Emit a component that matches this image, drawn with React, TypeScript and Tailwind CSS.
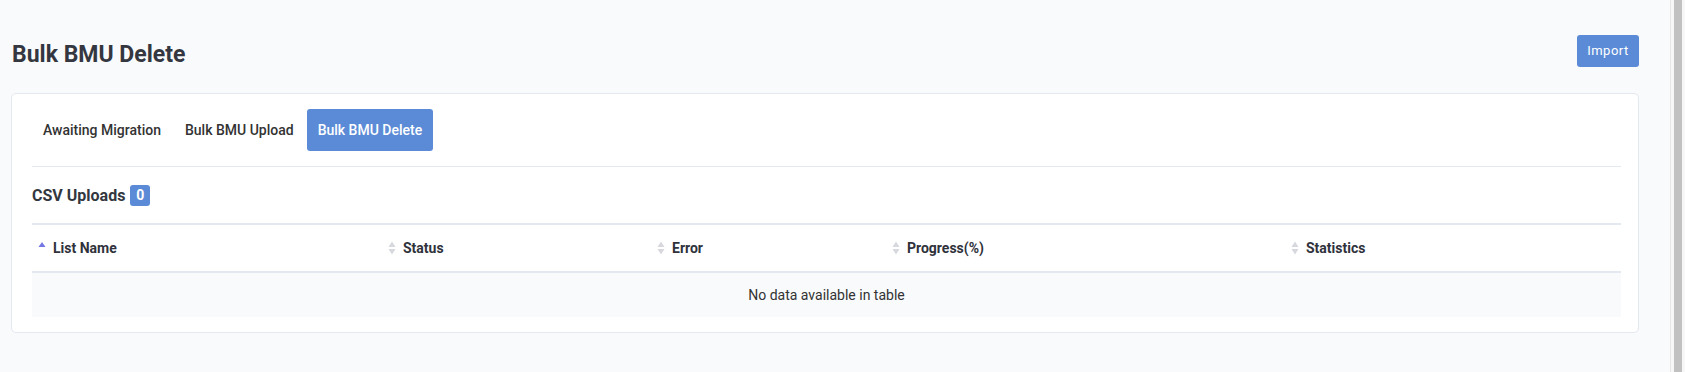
import React from "react";

const SortBoth = () => (
  <svg width="8" height="14" viewBox="0 0 8 14" className="shrink-0">
    <path d="M4 0.5 L7.5 6 L0.5 6 Z" fill="#d6d8dd" />
    <path d="M4 13.5 L7.5 8 L0.5 8 Z" fill="#d6d8dd" />
  </svg>
);

const SortAsc = () => (
  <svg width="8" height="14" viewBox="0 0 8 14" className="shrink-0">
    <path d="M4 1 L7.5 6 L0.5 6 Z" fill="#7376e3" />
  </svg>
);

export default function App() {
  const cols = [
    { name: "List Name", asc: true },
    { name: "Status" },
    { name: "Error" },
    { name: "Progress(%)" },
    { name: "Statistics" },
  ];
  return (
    <div
      className="flex h-[372px] w-full bg-[#f9fafc] text-[#333]"
      style={{ fontFamily: "Roboto, 'Liberation Sans', sans-serif" }}
    >
      <div className="flex-1 pl-[11px] pr-[31px] pt-[35px]">
        <div className="flex items-start justify-between">
          <h1 className="ml-px mt-[6px] text-[23px] font-bold leading-[27px] text-[#343740]">
            Bulk BMU Delete
          </h1>
          <button className="h-[32px] w-[62px] rounded-[3px] bg-[#5b8bd6] text-[13px] font-normal tracking-[0.04em] text-white">
            Import
          </button>
        </div>
        <div className="mt-[25px] rounded-[5px] border border-[#e4e8ef] bg-white pb-[15px] pl-[20px] pr-[17px] pt-[15px]">
          <div className="flex gap-[2px]">
            <div className="flex h-[42px] items-center px-[11px] text-[14px] font-medium text-[#333]">
              Awaiting Migration
            </div>
            <div className="flex h-[42px] items-center px-[11px] text-[14px] font-medium text-[#333]">
              Bulk BMU Upload
            </div>
            <div className="flex h-[42px] items-center rounded-[3px] bg-[#5b8bd6] px-[11px] text-[14px] font-medium text-white">
              Bulk BMU Delete
            </div>
          </div>
          <div className="mt-[15px] h-px bg-[#e4e8f0]" />
          <div className="mt-[18px] flex items-center gap-[5px]">
            <span className="text-[16px] font-bold leading-[21px] text-[#333740]">
              CSV Uploads
            </span>
            <span className="flex h-[21px] w-[20px] items-center justify-center rounded-[3px] bg-[#5b8bd6] text-[14px] font-bold text-white">
              0
            </span>
          </div>
          <div className="mt-[17px]">
            <div className="grid h-[50px] grid-cols-[350px_269px_235px_399px_1fr] border-y-2 border-[#e4e8f0]">
              {cols.map((c) => (
                <div key={c.name} className="flex items-center gap-[7px] pl-[6px]">
                  {c.asc ? <SortAsc /> : <SortBoth />}
                  <span className="text-[14px] font-bold text-[#2f323b]">{c.name}</span>
                </div>
              ))}
            </div>
            <div className="flex h-[44px] items-center justify-center bg-[#f9fafc] text-[14px] text-[#333]">
              No data available in table
            </div>
          </div>
        </div>
      </div>
      <div className="flex h-full w-[15px] border-l border-[#e6e6e6] bg-[#f7f7f7] pl-[3px]">
        <div className="h-full w-[8px] bg-[#c1c1c1]" />
      </div>
    </div>
  );
}
